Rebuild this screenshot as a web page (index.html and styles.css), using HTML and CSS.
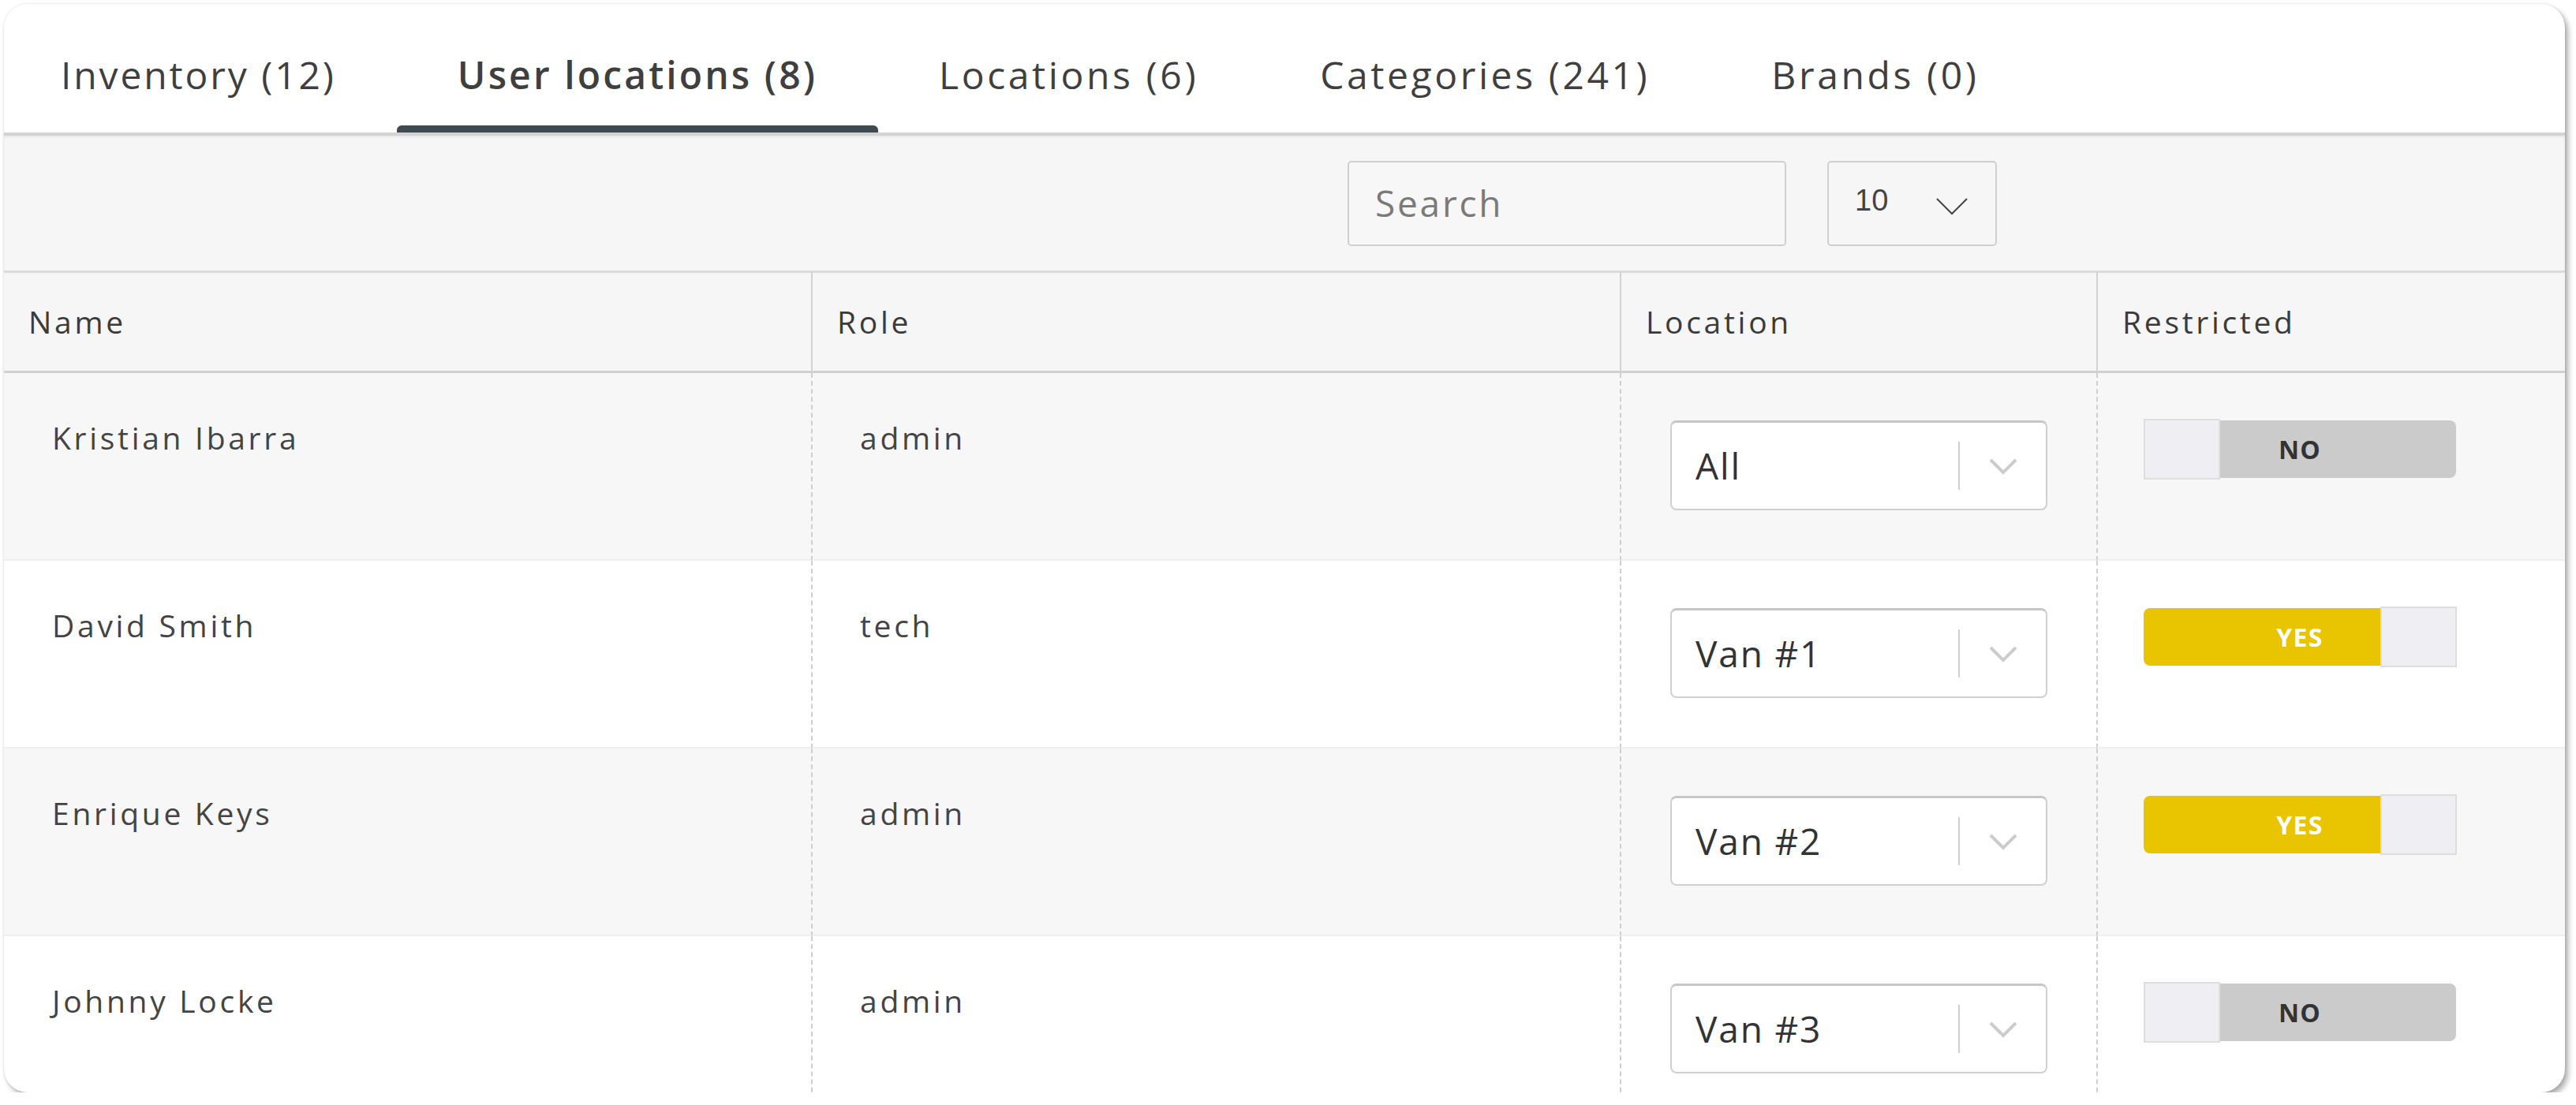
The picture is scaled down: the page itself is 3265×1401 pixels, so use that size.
FILE: index.html
```html
<!DOCTYPE html>
<html lang="en">
<head>
    <meta charset="UTF-8">
    <title>User locations</title>
    <link rel="stylesheet" href="styles.css">
</head>
<body>
<!-- the whole panel -->
<div class="card">
    <!-- tabs -->
    <ul class="tabs">
        <li class="tab">Inventory (12)</li>
        <li class="tab active">User locations (8)</li>
        <li class="tab">Locations (6)</li>
        <li class="tab">Categories (241)</li>
        <li class="tab">Brands (0)</li>
    </ul>

    <!-- search + page size -->
    <div class="toolbar">
        <input class="search" type="text" placeholder="Search">
        <div class="page-size">
            <span>10</span>
            <svg class="caret" width="40" height="22" viewBox="0 0 40 22">
                <polyline points="1,1 20,20 39,1" fill="none" stroke="#444" stroke-width="2"/>
            </svg>
        </div>
    </div>

    <table class="grid">
        <colgroup>
            <col class="c-name">
            <col class="c-role">
            <col class="c-loc">
            <col class="c-res">
        </colgroup>
        <thead>
        <tr>
            <th>Name</th>
            <th>Role</th>
            <th>Location</th>
            <th>Restricted</th>
        </tr>
        </thead>
        <tbody>
        <tr class="odd">
            <td>Kristian Ibarra</td>
            <td>admin</td>
            <td>
                <div class="picker">
                    <span class="picker-value">All</span>
                    <span class="picker-sep"></span>
                    <svg class="picker-arrow" width="38" height="22" viewBox="0 0 38 22">
                        <polyline points="3,3 19,19 35,3" fill="none" stroke="#ccc" stroke-width="4"/>
                    </svg>
                </div>
            </td>
            <td>
                <div class="toggle off">
                    <span class="knob"></span>
                    <span class="toggle-label">NO</span>
                </div>
            </td>
        </tr>
        <tr>
            <td>David Smith</td>
            <td>tech</td>
            <td>
                <div class="picker">
                    <span class="picker-value">Van #1</span>
                    <span class="picker-sep"></span>
                    <svg class="picker-arrow" width="38" height="22" viewBox="0 0 38 22">
                        <polyline points="3,3 19,19 35,3" fill="none" stroke="#ccc" stroke-width="4"/>
                    </svg>
                </div>
            </td>
            <td>
                <div class="toggle on">
                    <span class="toggle-label">YES</span>
                    <span class="knob"></span>
                </div>
            </td>
        </tr>
        <tr class="odd">
            <td>Enrique Keys</td>
            <td>admin</td>
            <td>
                <div class="picker">
                    <span class="picker-value">Van #2</span>
                    <span class="picker-sep"></span>
                    <svg class="picker-arrow" width="38" height="22" viewBox="0 0 38 22">
                        <polyline points="3,3 19,19 35,3" fill="none" stroke="#ccc" stroke-width="4"/>
                    </svg>
                </div>
            </td>
            <td>
                <div class="toggle on">
                    <span class="toggle-label">YES</span>
                    <span class="knob"></span>
                </div>
            </td>
        </tr>
        <tr>
            <td>Johnny Locke</td>
            <td>admin</td>
            <td>
                <div class="picker">
                    <span class="picker-value">Van #3</span>
                    <span class="picker-sep"></span>
                    <svg class="picker-arrow" width="38" height="22" viewBox="0 0 38 22">
                        <polyline points="3,3 19,19 35,3" fill="none" stroke="#ccc" stroke-width="4"/>
                    </svg>
                </div>
            </td>
            <td>
                <div class="toggle off">
                    <span class="knob"></span>
                    <span class="toggle-label">NO</span>
                </div>
            </td>
        </tr>
        </tbody>
    </table>
</div>
</body>
</html>
```

FILE: styles.css
```css
* {
    margin: 0;
    padding: 0;
    box-sizing: border-box;
}

body {
    background-color: #fff;
    font-family: "Open Sans", "Noto Sans", sans-serif;
    color: #444;
}

/* outer panel */
.card {
    width: 3246px;
    height: 1380px;
    margin: 5px 0 0 5px;
    border-radius: 30px;
    background-color: #fff;
    overflow: hidden;
    box-shadow: 0 0 3px rgba(0, 0, 0, 0.12), 4px 5px 7px rgba(0, 0, 0, 0.32);
}

/* tabs */
.tabs {
    list-style: none;
    display: flex;
    height: 167px;
    padding-left: 0;
    border-bottom: 4px solid #d3d3d3;
}

.tab {
    position: relative;
    padding: 60px 77px 0;
    font-size: 48px;
    line-height: 60px;
    font-weight: 500;
    letter-spacing: 0.075em;
    color: #3f3f3f;
}

.tab:first-child {
    padding-left: 72px;
    letter-spacing: 0.06em;
}

.tab.active {
    font-weight: 600;
    letter-spacing: 0.065em;
}

/* dark bar under the active tab */
.tab.active::after {
    content: "";
    position: absolute;
    left: 0;
    right: 0;
    bottom: 0;
    height: 9px;
    border-radius: 6px 6px 0 0;
    background-color: #3e4a51;
}

/* search bar */
.toolbar {
    display: flex;
    justify-content: flex-end;
    align-items: center;
    gap: 52px;
    height: 171px;
    padding-right: 720px;
    background-color: #f6f6f6;
    box-shadow: inset 0 2px 3px rgba(0, 0, 0, 0.06);
}

.search {
    width: 556px;
    height: 108px;
    padding: 0 0 2px 33px;
    border: 2px solid #cfcfcf;
    border-radius: 5px;
    background-color: #f7f7f7;
    font-family: "Open Sans", "Noto Sans", sans-serif;
    font-size: 46px;
    letter-spacing: 0.06em;
    color: #444;
    outline: none;
}

.search::placeholder {
    color: #7a7a7a;
}

.page-size {
    display: flex;
    align-items: center;
    width: 215px;
    height: 108px;
    padding: 0 0 6px 33px;
    border: 2px solid #cfcfcf;
    border-radius: 5px;
    font-family: "Liberation Sans", Arial, sans-serif;
    font-size: 38px;
    color: #444;
}

.page-size .caret {
    margin: 14px 0 0 61px;
}

/* table */
.grid {
    width: 3246px;
    table-layout: fixed;
    border-collapse: separate;
    border-spacing: 0;
}

.c-name {
    width: 1023px;
}

.c-role {
    width: 1025px;
}

.c-loc {
    width: 604px;
}

.c-res {
    width: 594px;
}

.grid th {
    height: 130px;
    padding: 0 0 2px 31px;
    text-align: left;
    font-size: 39px;
    font-weight: 500;
    letter-spacing: 0.095em;
    color: #3b3b3b;
    background-color: #f6f6f6;
    border-top: 3px solid #dadada;
    border-bottom: 3px solid #d0d0d0;
    border-left: 2px solid #d2d2d2;
}

.grid th:first-child {
    border-left: none;
}

.grid td {
    height: 238px;
    padding: 53px 0 0 60px;
    vertical-align: top;
    font-size: 39px;
    line-height: 1.5;
    letter-spacing: 0.095em;
    color: #444;
    border-left: 2px dashed #cfcfcf;
    border-bottom: 2px solid #efefef;
}

.grid td:first-child {
    border-left: none;
    padding-left: 61px;
}

.grid tr.odd td {
    background-color: #f7f7f7;
}

.grid td:nth-child(3) {
    padding: 60px 0 0 62px;
}

.grid td:nth-child(4) {
    padding: 58px 0 0 58px;
}

/* location select */
.picker {
    display: flex;
    align-items: center;
    width: 478px;
    height: 114px;
    padding-left: 30px;
    border: 2px solid #d0d0d0;
    border-top: 3px solid #c6c6c6;
    border-radius: 8px;
    background-color: #fff;
}

.picker-value {
    width: 333px;
    font-size: 46px;
    letter-spacing: 0.04em;
    color: #333;
}

.picker-sep {
    width: 2px;
    height: 61px;
    background-color: #d0d0d0;
}

.picker-arrow {
    margin-left: 36px;
}

/* restricted switch */
.toggle {
    position: relative;
    width: 396px;
    height: 73px;
    margin-top: 2px;
    border-radius: 8px;
    text-align: center;
}

.toggle.off {
    background-color: #cbcbcb;
}

.toggle.on {
    background-color: #e9c400;
}

.toggle-label {
    font-size: 32px;
    line-height: 73px;
    font-weight: 700;
    letter-spacing: 0.04em;
}

.toggle.off .toggle-label {
    color: #333;
}

.toggle.on .toggle-label {
    color: #fff;
}

.knob {
    position: absolute;
    top: -2px;
    width: 97px;
    height: 77px;
    background-color: #efeff3;
    border: 2px solid #dedede;
}

.toggle.off .knob {
    left: 0;
}

.toggle.on .knob {
    right: -1px;
}
```
